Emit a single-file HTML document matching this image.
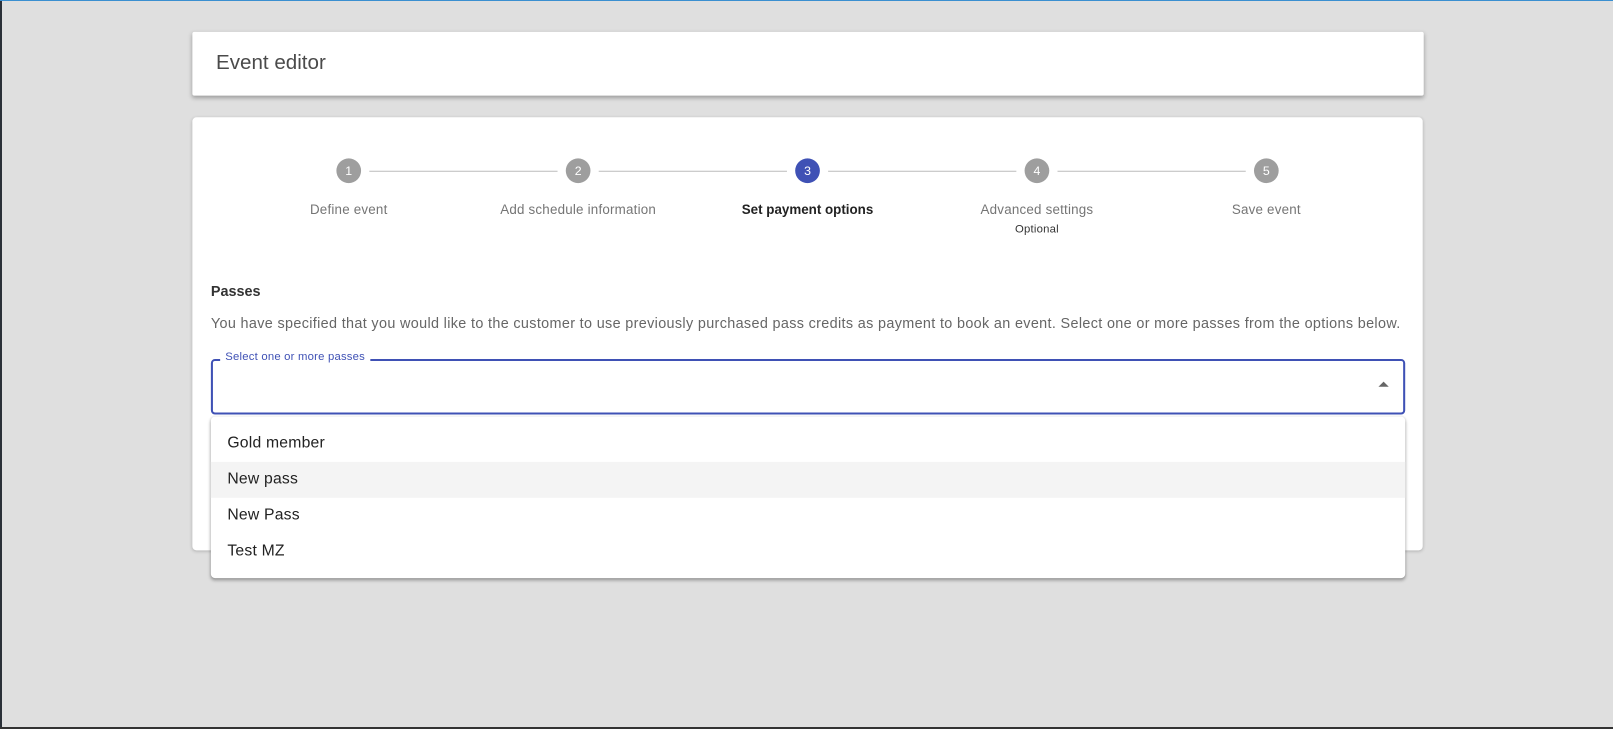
<!DOCTYPE html>
<html><head><meta charset="utf-8"><style>
*{box-sizing:border-box;margin:0;padding:0}
body{width:1613px;height:728px;background:#dfdfdf;font-family:"Liberation Sans",sans-serif;position:relative;overflow:hidden;border-top:1px solid #3a8fd0;}
.abs{position:absolute}
#w{position:absolute;left:0;top:0;width:1568px;height:708px;transform:scale(1.0287);transform-origin:0 0}
.card{background:#fff;border-radius:4px}
.c{width:24px;height:24px;border-radius:50%;background:#9e9e9e;color:#fff;font-size:12px;text-align:center;line-height:24px}
.ln{height:1px;background:#bdbdbd;top:165px}
.lb{font-size:13px;color:#757575;width:224px;text-align:center;top:195px;letter-spacing:0.2px}
.it{left:221px;font-size:15.3px;color:#222;letter-spacing:0.2px}
</style></head><body>
<div class="abs" style="left:0;top:0;width:2px;height:728px;background:#2a3038;z-index:2"></div>
<div class="abs" style="left:0;top:726px;width:1613px;height:2px;background:#333;z-index:2"></div>
<div id="w">
<div class="abs card" style="left:187px;top:30px;width:1197px;height:62px;border-radius:2px;box-shadow:0 2px 4px rgba(0,0,0,.3)"></div>
<div class="abs" style="left:210px;top:49px;font-size:20px;color:#4a4a4a">Event editor</div>
<div class="abs card" style="left:187px;top:113px;width:1196px;height:421px;box-shadow:0 1px 3px rgba(0,0,0,.2)"></div>

<div class="abs c" style="left:327px;top:153px">1</div>
<div class="abs c" style="left:550px;top:153px">2</div>
<div class="abs c" style="left:773px;top:153px;background:#3f51b5">3</div>
<div class="abs c" style="left:996px;top:153px">4</div>
<div class="abs c" style="left:1219px;top:153px">5</div>
<div class="abs ln" style="left:359px;width:183px"></div>
<div class="abs ln" style="left:582px;width:183px"></div>
<div class="abs ln" style="left:805px;width:183px"></div>
<div class="abs ln" style="left:1028px;width:183px"></div>
<div class="abs lb" style="left:227px">Define event</div>
<div class="abs lb" style="left:450px">Add schedule information</div>
<div class="abs lb" style="left:673px;color:#222;font-weight:bold;letter-spacing:0">Set payment options</div>
<div class="abs lb" style="left:896px">Advanced settings</div>
<div class="abs lb" style="left:896px;top:216px;font-size:11px;color:#333">Optional</div>
<div class="abs lb" style="left:1119px">Save event</div>

<div class="abs" style="left:205px;top:274px;font-size:14px;font-weight:bold;color:#333">Passes</div>
<div class="abs" style="left:205px;top:305px;font-size:14px;color:#666;letter-spacing:0.33px;white-space:nowrap">You have specified that you would like to the customer to use previously purchased pass credits as payment to book an event. Select one or more passes from the options below.</div>

<div class="abs" style="left:205px;top:348px;width:1161px;height:54px;border:2px solid #3f51b5;border-radius:4px"></div>
<div class="abs" style="left:214px;top:340px;background:#fff;padding:0 5px;font-size:11px;color:#3f51b5;letter-spacing:0.2px">Select one or more passes</div>
<div class="abs" style="left:1340px;top:370px;width:0;height:0;border-left:5px solid transparent;border-right:5px solid transparent;border-bottom:5px solid #666"></div>

<div class="abs card" style="left:205px;top:404px;width:1161px;height:157px;box-shadow:0 2px 3px rgba(0,0,0,.3),0 0 2px rgba(0,0,0,.1)"></div>
<div class="abs" style="left:205px;top:448px;width:1161px;height:35px;background:#f4f4f4"></div>
<div class="abs it" style="top:421px">Gold member</div>
<div class="abs it" style="top:456px">New pass</div>
<div class="abs it" style="top:491px">New Pass</div>
<div class="abs it" style="top:526px">Test MZ</div>
</div>
</body></html>
